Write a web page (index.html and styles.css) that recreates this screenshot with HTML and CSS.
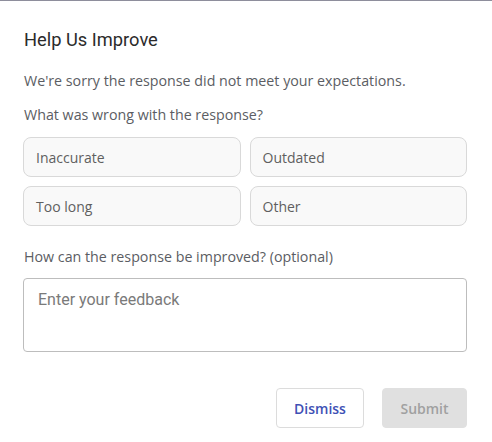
FILE: index.html
```html
<!DOCTYPE html>
<html lang="en">
<head>
<meta charset="utf-8">
<title>Help Us Improve</title>
<link rel="stylesheet" href="styles.css">
</head>
<body>
<div class="dialog">
  <h2 class="title">Help Us Improve</h2>
  <p class="intro">We're sorry the response did not meet your expectations.</p>
  <p class="question">What was wrong with the response?</p>
  <div class="options">
    <button class="option">Inaccurate</button>
    <button class="option">Outdated</button>
    <button class="option">Too long</button>
    <button class="option">Other</button>
  </div>
  <p class="label">How can the response be improved? (optional)</p>
  <textarea class="feedback" placeholder="Enter your feedback"></textarea>
  <div class="actions">
    <button class="btn btn-dismiss">Dismiss</button>
    <button class="btn btn-submit" disabled>Submit</button>
  </div>
</div>
</body>
</html>
```
FILE: styles.css
```css
html, body {
  margin: 0;
  padding: 0;
  background: #ffffff;
}

.dialog {
  box-sizing: border-box;
  width: 492px;
  height: 442px;
  border-top: 1px solid #8e8e9c;
  padding: 0 25px 0 23px;
  display: flex;
  flex-direction: column;
  font-family: "Segoe UI", "Open Sans", "Noto Sans", sans-serif;
}

.title {
  margin: 27px 0 0 1px;
  font-family: Roboto, sans-serif;
  font-weight: 400;
  font-size: 18.3px;
  line-height: 24px;
  color: #2b2b2b;
}

.intro,
.question,
.label {
  margin: 0 0 0 1px;
  font-size: 14.25px;
  line-height: 20px;
  color: #5b5d63;
}

.intro { margin-top: 19px; }
.question { margin-top: 14px; }
.label { margin-top: 21px; }

.options {
  margin-top: 12px;
  display: grid;
  grid-template-columns: 1fr 1fr;
  column-gap: 9px;
  row-gap: 9px;
}

.option {
  box-sizing: border-box;
  height: 40px;
  padding: 0 12px;
  text-align: left;
  background: #f9f9f9;
  border: 1px solid #d9d9d9;
  border-radius: 8px;
  font-family: inherit;
  font-size: 14px;
  color: #5f5f5f;
}

.feedback {
  box-sizing: border-box;
  margin-top: 11px;
  width: 100%;
  height: 74px;
  padding: 10px 14px;
  border: 1px solid #bdbdbd;
  border-radius: 4px;
  resize: none;
  font-family: Roboto, sans-serif;
  font-size: 16px;
  line-height: 22px;
  color: #333;
}

.feedback::placeholder {
  color: #7a7a7a;
}

.actions {
  margin-top: 36px;
  display: flex;
  justify-content: flex-end;
  gap: 18px;
}

.btn {
  box-sizing: border-box;
  height: 40px;
  border-radius: 4px;
  font-family: inherit;
  font-size: 14px;
  font-weight: 600;
}

.btn-dismiss {
  width: 88px;
  background: #ffffff;
  border: 1px solid #dcdcdc;
  color: #3f51b5;
}

.btn-submit {
  width: 85px;
  background: #e0e0e0;
  border: 1px solid #e0e0e0;
  color: #a0a0a0;
}
```
